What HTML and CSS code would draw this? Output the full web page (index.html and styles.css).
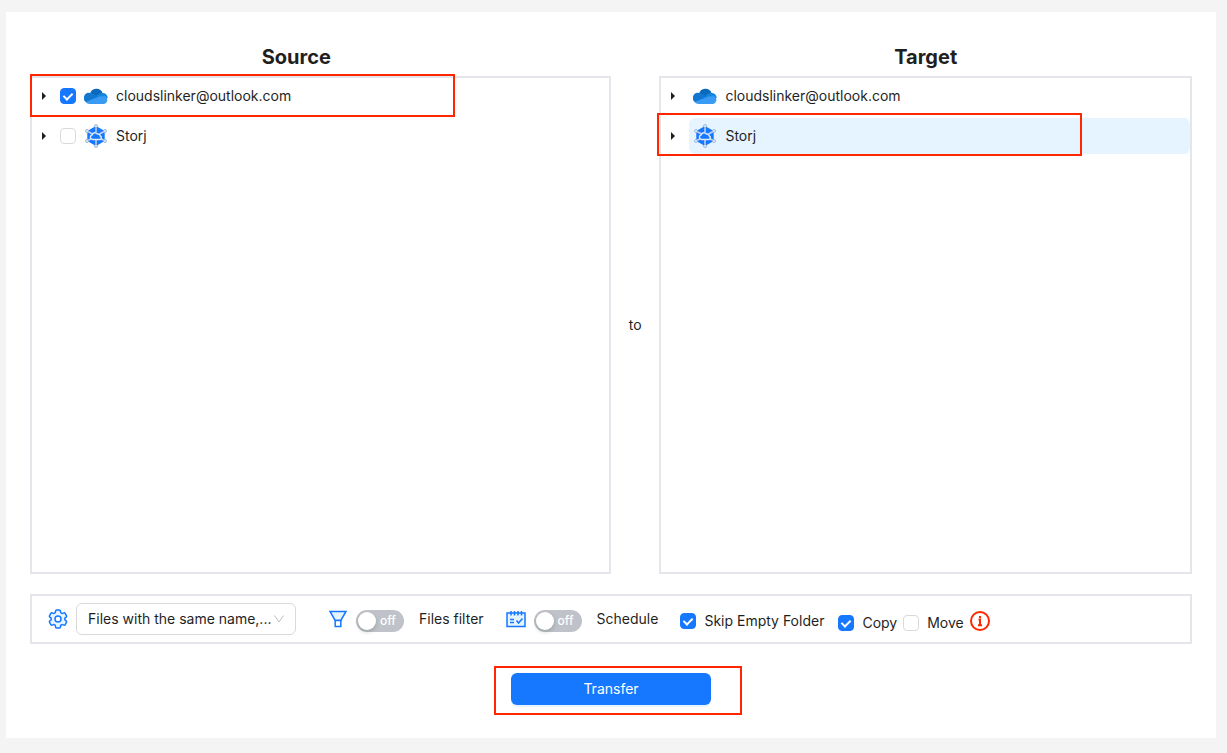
FILE: index.html
```html
<!DOCTYPE html>
<html lang="en">
<head>
    <meta charset="UTF-8">
    <meta name="viewport" content="width=device-width, initial-scale=1.0">
    <title>Transfer</title>
    <link rel="stylesheet" href="styles.css">
</head>
<body>
    <!-- shared drive logos -->
    <svg class="sprite" aria-hidden="true">
        <symbol id="onedrive" viewBox="0 0 24 16">
            <path fill="#0a68bd" d="M6 6A6.500 6.500 0 0 1 18.600 5.200L19 9L8 11z"/>
            <path fill="#1177cf" d="M6 5c2 0 3.500.6 5 1.700L16 10L3 14.500A5 5 0 0 1 6 5z"/>
            <path fill="#1484dc" d="M18.400 5a5 5 0 0 1 5.300 5L15 11l-2.500-3.500l2.500-1.700a6 6 0 0 1 3.400-.8z"/>
            <path fill="#3a9bf4" d="M15 8.500l6.500-.3A4.300 4.300 0 0 1 20 16H5.600a5.400 5.400 0 0 1-4-2z"/>
        </symbol>
        <symbol id="storj" viewBox="0 0 24 24">
            <path fill="#1677ff" d="M12 2l8.700 5v10L12 22l-8.700-5V7z"/>
            <path stroke="#c3d3e8" stroke-width="1.500" d="M12 1v7M12 16v7M3 7l5.500 3M21 7l-5.500 3M3 17l5.500-3M21 17l-5.500-3"/>
            <path fill="#1677ff" stroke="#dce9fa" stroke-width="1.500" d="M8.500 15.500a2.400 2.400 0 0 1-.3-4.700A3 3 0 0 1 13.500 10a2.500 2.500 0 0 1 2.800 2a1.900 1.900 0 0 1-.3 3.500z"/>
            <g fill="#e9f2fd" stroke="#8aa9d2" stroke-width=".8">
                <circle cx="12" cy="2" r="1.500"/>
                <circle cx="12" cy="22" r="1.500"/>
                <circle cx="3" cy="7" r="1.500"/>
                <circle cx="21" cy="7" r="1.500"/>
                <circle cx="3" cy="17" r="1.500"/>
                <circle cx="21" cy="17" r="1.500"/>
            </g>
        </symbol>
    </svg>

    <main class="panel">
        <div class="titles">
            <h2>Source</h2>
            <h2>Target</h2>
        </div>

        <div class="panes">
            <ul class="tree">
                <li class="row marked marked-source">
                    <button class="caret" aria-label="Expand"></button>
                    <label class="node">
                        <input class="check" type="checkbox" checked>
                        <svg class="drive"><use href="#onedrive" y="4" width="24" height="16"/></svg>
                        <span>cloudslinker@outlook.com</span>
                    </label>
                </li>
                <li class="row">
                    <button class="caret" aria-label="Expand"></button>
                    <label class="node">
                        <input class="check" type="checkbox">
                        <svg class="drive"><use href="#storj"/></svg>
                        <span>Storj</span>
                    </label>
                </li>
            </ul>

            <div class="to">to</div>

            <ul class="tree tree-target">
                <li class="row">
                    <button class="caret" aria-label="Expand"></button>
                    <div class="node">
                        <svg class="drive"><use href="#onedrive" y="4" width="24" height="16"/></svg>
                        <span>cloudslinker@outlook.com</span>
                    </div>
                </li>
                <li class="row marked marked-target">
                    <button class="caret" aria-label="Expand"></button>
                    <div class="node selected">
                        <svg class="drive"><use href="#storj"/></svg>
                        <span>Storj</span>
                    </div>
                </li>
            </ul>
        </div>

        <div class="toolbar">
            <div class="rule">
                <svg class="icon" viewBox="2 2 20 20">
                    <path fill="#e6f4ff" d="M9.594 3.94c.09-.542.56-.94 1.11-.94h2.593c.55 0 1.02.398 1.11.94l.213 1.281c.063.374.313.686.645.87.074.04.147.083.22.127.325.196.72.257 1.075.124l1.217-.456a1.125 1.125 0 0 1 1.37.49l1.296 2.247a1.125 1.125 0 0 1-.26 1.431l-1.003.827c-.293.241-.438.613-.43.992a7.723 7.723 0 0 1 0 .255c-.008.378.137.75.43.991l1.004.827c.424.35.534.955.26 1.43l-1.298 2.247a1.125 1.125 0 0 1-1.369.491l-1.217-.456c-.355-.133-.75-.072-1.076.124a6.47 6.47 0 0 1-.22.128c-.331.183-.581.495-.644.869l-.213 1.281c-.09.543-.56.94-1.11.94h-2.594c-.55 0-1.019-.398-1.11-.94l-.213-1.281c-.062-.374-.312-.686-.644-.87a6.52 6.52 0 0 1-.22-.127c-.325-.196-.72-.257-1.076-.124l-1.217.456a1.125 1.125 0 0 1-1.369-.49l-1.297-2.247a1.125 1.125 0 0 1 .26-1.431l1.004-.827c.292-.24.437-.613.43-.991a6.932 6.932 0 0 1 0-.255c.007-.38-.138-.751-.43-.992l-1.004-.827a1.125 1.125 0 0 1-.26-1.43l1.297-2.247a1.125 1.125 0 0 1 1.37-.491l1.216.456c.356.133.751.072 1.076-.124.072-.044.146-.086.22-.128.332-.183.582-.495.644-.869l.214-1.28Z"/>
                    <circle cx="12" cy="12" r="3" fill="#fff"/>
                </svg>
                <div class="select">
                    <select aria-label="Duplicate file rule">
                        <option>Files with the same name,...</option>
                    </select>
                    <svg viewBox="0 0 12 12"><path d="M1.500 2.500L6 9l4.500-6.500"/></svg>
                </div>
            </div>

            <label class="option">
                <svg class="icon" viewBox="0 0 20 20">
                    <path fill="#e6f4ff" d="M2 2.500h16l-5.200 9H7.200z"/>
                    <path fill="#fff" d="M7.200 11.500h5.600v6H7.200z"/>
                </svg>
                <span class="switch"><input type="checkbox" role="switch"><span>off</span></span>
                <span>Files filter</span>
            </label>

            <label class="option">
                <svg class="icon" viewBox="0 0 20 20">
                    <path fill="#e6f4ff" d="M1 4h18v13.500H1z"/>
                    <path d="M5 2v4.500M8.500 2v4.500M12 2v4.500M15.500 2v4.500M4 10.500h4M4 13.500h4M10.500 11.500l2 2.500l4-4.500"/>
                </svg>
                <span class="switch"><input type="checkbox" role="switch"><span>off</span></span>
                <span>Schedule</span>
            </label>

            <label class="choice skip"><input class="check" type="checkbox" checked>Skip Empty Folder</label>

            <div class="modes">
                <label class="choice"><input class="check" type="checkbox" checked>Copy</label>
                <label class="choice"><input class="check" type="checkbox">Move</label>
            </div>

            <svg class="icon info" viewBox="0 0 20 20">
                <circle cx="10" cy="10" r="9"/>
                <path d="M8.500 8.500H10V14M8 14.200h4M10 5v2"/>
            </svg>
        </div>

        <div class="actions">
            <div class="marked marked-action">
                <button class="transfer">Transfer</button>
            </div>
        </div>
    </main>
</body>
</html>
```
FILE: styles.css
```css
*, *::before, *::after {
    box-sizing: border-box;
}
body {
    margin: 0;
    padding: 12px 11px 15px 6px;
    background: #f4f4f4;
    color: #1f1f1f;
    font-family: Inter, "Liberation Sans", sans-serif;
    font-size: 14px;
    line-height: 22px;
}
button, input, select {
    margin: 0;
    font: inherit;
    color: inherit;
}
.sprite {
    position: absolute;
    width: 0;
    height: 0;
}
.panel {
    padding: 29px 24px 33px;
    background: #fff;
}

/* titles and panes share a 24 part grid */
.titles {
    display: grid;
    grid-template-columns: 11fr 11fr;
    column-gap: 8.3333%;
    margin-bottom: 3px;
}
h2 {
    margin: 0;
    font-size: 20px;
    font-weight: 700;
    line-height: 32px;
    text-align: center;
}
.panes {
    display: grid;
    grid-template-columns: 12fr 1fr 11fr;
}
.to {
    align-self: center;
    text-align: center;
}
.tree {
    min-height: 498px;
    margin: 0;
    padding: 0;
    border: 2px solid #e5e6eb;
    list-style: none;
}
.row {
    display: flex;
    align-items: center;
    margin-bottom: 4px;
}
.caret {
    display: flex;
    align-items: center;
    justify-content: center;
    width: 24px;
    height: 24px;
    margin-right: 4px;
    padding: 0;
    border: 0;
    background: none;
}
.caret::before {
    content: "";
    border: 4px solid transparent;
    border-left-color: #1f1f1f;
    border-right: 0;
}
.node {
    display: flex;
    flex: 1;
    align-items: center;
    gap: 8px;
    height: 36px;
    border-radius: 6px;
}
.tree-target .node {
    padding-left: 4px;
}
.selected {
    background: #e6f4ff;
}
.drive {
    width: 24px;
    height: 24px;
}

.check {
    appearance: none;
    display: grid;
    place-items: center;
    width: 16px;
    height: 16px;
    border: 1px solid #d9d9d9;
    border-radius: 4px;
    background: #fff;
}
.check:checked {
    border-color: #1677ff;
    background: #1677ff;
}
.check:checked::after {
    content: "";
    width: 6px;
    height: 9px;
    border: solid #fff;
    border-width: 0 2px 2px 0;
    transform: translateY(-1px) rotate(45deg);
}

/* red frames around the steps */
.marked {
    position: relative;
}
.marked::after {
    content: "";
    position: absolute;
    border: 2px solid #ff2600;
    pointer-events: none;
}
.marked-source::after {
    top: -4px;
    left: -2px;
    width: 425px;
    height: 43px;
}
.marked-target::after {
    top: -5px;
    left: -4px;
    width: 425px;
    height: 43px;
}
.marked-action::after {
    inset: -7px -31px -10px -17px;
}

.toolbar {
    display: flex;
    align-items: center;
    min-height: 50px;
    margin-top: 20px;
    padding: 0 16px;
    border: 2px solid #e5e6eb;
    white-space: nowrap;
}
.rule, .option {
    display: flex;
    align-items: center;
    gap: 8px;
}
.rule {
    margin-right: 32px;
}
.option {
    margin-right: 22px;
}
.icon {
    flex: none;
    width: 20px;
    height: 20px;
    fill: none;
    stroke: #1677ff;
    stroke-width: 1.5;
}
.select {
    display: grid;
    width: 220px;
}
.select select, .select svg {
    grid-area: 1 / 1;
}
.select select {
    appearance: none;
    height: 32px;
    padding: 0 11px;
    border: 1px solid #d9d9d9;
    border-radius: 6px;
    background: #fff;
}
.select svg {
    place-self: center end;
    width: 12px;
    height: 12px;
    margin-right: 11px;
    fill: none;
    stroke: #bfbfbf;
    pointer-events: none;
}
.switch {
    display: grid;
    align-items: center;
    width: 48px;
    margin: 4px 7px 0 0;
}
.switch input, .switch span {
    grid-area: 1 / 1;
}
.switch input {
    appearance: none;
    width: 48px;
    height: 22px;
    padding: 2px;
    border-radius: 11px;
    background: #bfc2c8;
}
.switch input::before {
    content: "";
    display: block;
    width: 18px;
    height: 18px;
    border-radius: 50%;
    background: #fff;
    box-shadow: 0 2px 4px rgba(0, 35, 11, 0.2);
}
.switch span {
    padding-left: 24px;
    color: #fff;
    font-size: 12px;
    font-weight: 500;
}
.choice {
    display: flex;
    align-items: center;
    gap: 8px;
}
.skip {
    margin: 4px 14px 0 0;
}
.modes {
    display: flex;
    gap: 6px;
    margin: 8px 6px 0 0;
}
.info {
    margin-top: 4px;
    stroke: #ff2600;
    stroke-width: 2;
}

.actions {
    display: flex;
    justify-content: center;
    margin-top: 29px;
}
.transfer {
    display: block;
    width: 200px;
    height: 32px;
    border: 0;
    border-radius: 6px;
    background: #1677ff;
    box-shadow: 0 2px 0 rgba(5, 145, 255, 0.1);
    color: #fff;
}
```
